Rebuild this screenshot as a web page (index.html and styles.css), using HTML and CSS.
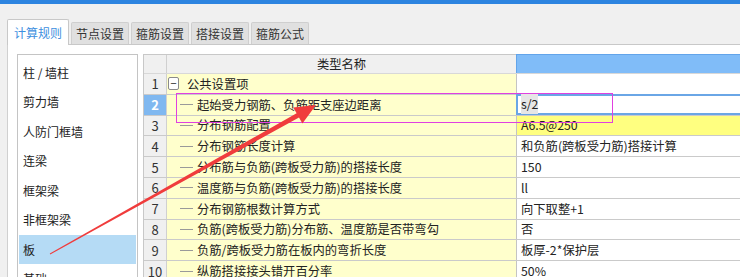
FILE: index.html
```html
<!DOCTYPE html>
<html lang="zh-CN">
<head>
  <meta charset="UTF-8">
  <meta name="viewport" content="width=device-width, initial-scale=1.0">
  <title>计算规则</title>
  <link rel="stylesheet" href="styles.css">
</head>
<body>
  <div class="topbar"></div>

  <div class="tabs">
    <div class="tab active">计算规则</div>
    <div class="tab">节点设置</div>
    <div class="tab">箍筋设置</div>
    <div class="tab">搭接设置</div>
    <div class="tab">箍筋公式</div>
  </div>

  <div class="panel">
    <ul class="list">
      <li>柱 / 墙柱</li>
      <li>剪力墙</li>
      <li>人防门框墙</li>
      <li>连梁</li>
      <li>框架梁</li>
      <li>非框架梁</li>
      <li class="selected">板</li>
      <li>基础</li>
    </ul>

    <div class="grid">
      <div class="row head">
        <div class="num"></div>
        <div class="name">类型名称</div>
        <div class="value"></div>
      </div>
      <div class="row">
        <div class="num">1</div>
        <div class="name group"><span class="toggle">−</span>公共设置项</div>
        <div class="value"></div>
      </div>
      <div class="row current">
        <div class="num">2</div>
        <div class="name"><span class="branch"></span>起始受力钢筋、负筋距支座边距离</div>
        <div class="value edit"><span class="sel">s/2</span></div>
      </div>
      <div class="row">
        <div class="num">3</div>
        <div class="name"><span class="branch"></span>分布钢筋配置</div>
        <div class="value marked">A6.5@250</div>
      </div>
      <div class="row">
        <div class="num">4</div>
        <div class="name"><span class="branch"></span>分布钢筋长度计算</div>
        <div class="value">和负筋(跨板受力筋)搭接计算</div>
      </div>
      <div class="row">
        <div class="num">5</div>
        <div class="name"><span class="branch"></span>分布筋与负筋(跨板受力筋)的搭接长度</div>
        <div class="value">150</div>
      </div>
      <div class="row">
        <div class="num">6</div>
        <div class="name"><span class="branch"></span>温度筋与负筋(跨板受力筋)的搭接长度</div>
        <div class="value">ll</div>
      </div>
      <div class="row">
        <div class="num">7</div>
        <div class="name"><span class="branch"></span>分布钢筋根数计算方式</div>
        <div class="value">向下取整+1</div>
      </div>
      <div class="row">
        <div class="num">8</div>
        <div class="name"><span class="branch"></span>负筋(跨板受力筋)分布筋、温度筋是否带弯勾</div>
        <div class="value">否</div>
      </div>
      <div class="row">
        <div class="num">9</div>
        <div class="name"><span class="branch"></span>负筋/跨板受力筋在板内的弯折长度</div>
        <div class="value">板厚-2*保护层</div>
      </div>
      <div class="row">
        <div class="num">10</div>
        <div class="name"><span class="branch"></span>纵筋搭接接头错开百分率</div>
        <div class="value">50%</div>
      </div>
    </div>
  </div>

  <!-- annotations drawn over the screenshot -->
  <div class="mark-box"></div>
  <svg class="arrow" width="740" height="277" viewBox="0 0 740 277">
    <polygon points="49.8,253.6 50.2,254.4 299.0,117.6 302.4,123.4 316,105 293.2,107.6 296.6,113.2" fill="#f03c3c"/>
  </svg>
</body>
</html>
```

FILE: styles.css
```css
* {
  box-sizing: border-box;
}

body {
  margin: 0;
  width: 740px;
  height: 277px;
  overflow: hidden;
  position: relative;
  background-color: #f0f0f0;
  font-family: "Noto Sans CJK SC", "Microsoft YaHei", sans-serif;
  font-size: 12px;
  color: #222;
}

.topbar {
  height: 4px;
  background-color: #2d84e0;
}

.tabs {
  display: flex;
  align-items: flex-end;
  gap: 2px;
  height: 40px;
  padding-left: 7px;
  position: relative;
  z-index: 1;
}

.tab {
  height: 22px;
  width: 58px;
  display: flex;
  align-items: center;
  justify-content: center;
  background-color: #e0e0e0;
  border: 1px solid #cfcfcf;
  border-bottom: none;
  border-radius: 2px 2px 0 0;
  color: #333;
}

.tab.active {
  height: 26px;
  width: 62px;
  margin-bottom: -1px;
  padding-bottom: 1px;
  background-color: #fff;
  border-color: #c8c8c8;
  color: #3d8fe0;
}

.panel {
  display: flex;
  gap: 5px;
  margin-left: 7px;
  height: 233px;
  padding: 9px 0 0 9px;
  background-color: #fff;
  border-top: 1px solid #c8c8c8;
  border-left: 1px solid #d0d0d0;
}

.list {
  list-style: none;
  margin: 0;
  padding: 2.5px 1px 0;
  width: 121px;
  flex-shrink: 0;
  border: 1px solid #c4c4c4;
  border-bottom: none;
}

.list li {
  height: 29.5px;
  line-height: 29.5px;
  padding-left: 4px;
}

.list li.selected {
  background-color: #b5dbf5;
}

.grid {
  width: 640px;
  flex-shrink: 0;
  border-top: 1px solid #c8c8c8;
  border-left: 1px solid #c8c8c8;
}

.row {
  display: flex;
  height: 20.8px;
  border-bottom: 1px solid #cacaca;
}

.row.head {
  height: 19px;
  border-bottom-color: #d8d8d8;
}

.num {
  width: 23px;
  flex-shrink: 0;
  display: flex;
  align-items: center;
  justify-content: center;
  background-color: #f0f0f0;
  border-right: 1px solid #d0d0d0;
  font-size: 13px;
  color: #333;
}

.name {
  width: 350px;
  flex-shrink: 0;
  display: flex;
  align-items: center;
  padding-left: 13px;
  background-color: #ffffcc;
  border-right: 1px solid #c4c4c4;
  white-space: nowrap;
  overflow: hidden;
  font-size: 12.3px;
}

.value {
  flex: 1;
  display: flex;
  align-items: center;
  padding-left: 4px;
  background-color: #fff;
  font-size: 12.3px;
  white-space: nowrap;
}

.head .name {
  justify-content: center;
  padding-left: 0;
  background-color: #f0f0f0;
  border-right-color: #d8d8d8;
}

.head .value {
  background-color: #80bcf8;
  border-left: 1px solid #62a4ea;
  margin-left: -1px;
  border-top: 1px solid #62a4ea;
  margin-top: -1px;
}

.name.group {
  padding-left: 1px;
}

.toggle {
  width: 11px;
  height: 13px;
  margin-right: 8px;
  display: flex;
  align-items: center;
  justify-content: center;
  border: 1px solid #8a8a8a;
  border-radius: 2px;
  background-color: #fff;
  font-size: 11px;
  line-height: 1;
}

.branch {
  width: 13px;
  height: 1px;
  margin-right: 4px;
  background-color: #9a9a9a;
}

.current .num {
  background-color: #80b8f0;
  color: #fff;
  font-weight: bold;
}

.value.edit {
  border: 2px solid #6aa6e6;
  margin-left: -1px;
  margin-top: -1px;
  padding-left: 3px;
}

.sel {
  background-color: #e6e6e6;
  padding: 1px 0;
}

.value.marked {
  background-color: #ffff80;
}

.mark-box {
  position: absolute;
  left: 176px;
  top: 93px;
  width: 437px;
  height: 30px;
  border: 1px solid #e040e0;
  pointer-events: none;
}

.arrow {
  position: absolute;
  left: 0;
  top: 0;
  pointer-events: none;
}
```
